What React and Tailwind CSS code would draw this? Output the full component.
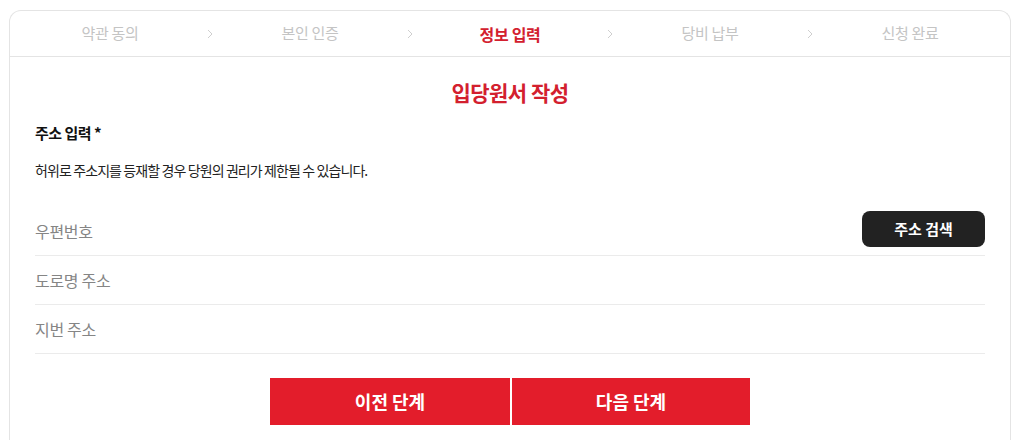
const steps = ["약관 동의", "본인 인증", "정보 입력", "당비 납부", "신청 완료"]
const fields = ["우편번호", "도로명 주소", "지번 주소"]

const Chevron = () => (
  <svg width="6" height="10" viewBox="0 0 6 10" className="absolute right-[-3px] top-1/2 -translate-y-1/2">
    <polyline points="1,1 5,5 1,9" fill="none" stroke="#cfcfcf" strokeWidth="1" />
  </svg>
)

export default function App() {
  return (
    <div
      className="min-h-[440px] bg-white pt-[10px] pl-[9px]"
      style={{ fontFamily: '"Noto Sans CJK KR", "Noto Sans", sans-serif' }}
    >
      <div className="h-[440px] w-[1002px] rounded-t-[12px] border border-b-0 border-[#e4e4e4]">
        {/* steps */}
        <div className="grid h-[46px] grid-cols-5 border-b border-[#e4e4e4]">
          {steps.map((s, i) => (
            <div key={s} className="relative flex items-center justify-center">
              <span
                className={
                  i === 2
                    ? "text-[16px] font-bold tracking-[-0.3px] text-[#d3202e]"
                    : "text-[15px] tracking-[-0.3px] text-[#c4c4c4]"
                }
              >
                {s}
              </span>
              {i < 4 && <Chevron />}
            </div>
          ))}
        </div>

        <div className="px-[25px]">
          <h1 className="mt-[20px] text-center text-[21px] font-bold tracking-[-0.5px] text-[#d3202e]">
            입당원서 작성
          </h1>
          <p className="mt-[13px] text-[15px] font-bold tracking-[-0.5px] text-[#111]">주소 입력 *</p>
          <p className="mt-[16px] text-[14px] tracking-[-0.9px] text-[#222]">
            허위로 주소지를 등재할 경우 당원의 권리가 제한될 수 있습니다.
          </p>

          <div className="mt-[26px]">
            {fields.map((f, i) => (
              <div
                key={f}
                className="flex h-[49px] items-center justify-between border-b border-[#ebebeb]"
              >
                <span className="text-[16px] tracking-[-0.3px] text-[#858585]">{f}</span>
                {i === 0 && (
                  <button className="mb-[4px] h-[36px] w-[123px] rounded-[8px] bg-[#222] text-[15px] font-bold text-white">
                    주소 검색
                  </button>
                )}
              </div>
            ))}
          </div>

          <div className="mt-[24px] flex justify-center gap-[2px]">
            <button className="h-[47px] w-[240px] bg-[#e31d2b] text-[18px] font-bold text-white">
              이전 단계
            </button>
            <button className="h-[47px] w-[238px] bg-[#e31d2b] text-[18px] font-bold text-white">
              다음 단계
            </button>
          </div>
        </div>
      </div>
    </div>
  )
}
